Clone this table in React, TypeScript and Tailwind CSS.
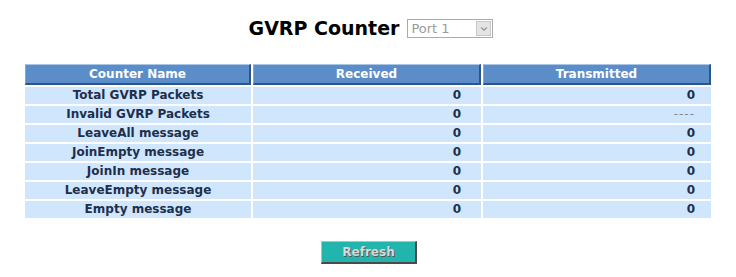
import { ChevronDown } from "lucide-react";

type CounterRow = { name: string; received: string; transmitted: string };

const ROWS: CounterRow[] = [
  { name: "Total GVRP Packets", received: "0", transmitted: "0" },
  { name: "Invalid GVRP Packets", received: "0", transmitted: "----" },
  { name: "LeaveAll message", received: "0", transmitted: "0" },
  { name: "JoinEmpty message", received: "0", transmitted: "0" },
  { name: "JoinIn message", received: "0", transmitted: "0" },
  { name: "LeaveEmpty message", received: "0", transmitted: "0" },
  { name: "Empty message", received: "0", transmitted: "0" },
];

const HEADERS = ["Counter Name", "Received", "Transmitted"];

export default function App() {
  return (
    <div
      className="w-[736px] h-[277px] bg-white text-[#1e2f4c]"
      style={{ fontFamily: '"DejaVu Sans", Verdana, sans-serif' }}
    >
      <div className="flex items-center justify-center gap-[8px] pt-[19px] pl-[6px]">
        <h1 className="text-[19px] font-bold text-black leading-[19px]">GVRP Counter</h1>
        <div className="flex items-center w-[86px] h-[19px] border border-[#a5acb2] bg-white">
          <span className="flex-1 pl-[3px] text-[13px] leading-[17px] text-[#9a9a9a]">Port 1</span>
          <span className="flex items-center justify-center w-[15px] h-[15px] mr-[1px] bg-[#e4e4e4] border border-[#c8c8c8]">
            <ChevronDown size={10} strokeWidth={3} className="text-[#9a9a9a]" />
          </span>
        </div>
      </div>

      <div className="pl-[25px] pt-[26px]">
        <table className="w-[690px] border-separate border-spacing-[2px] -m-[2px] text-[12px] font-bold">
          <thead>
            <tr>
              {HEADERS.map((h) => (
                <th
                  key={h}
                  className="h-[21px] p-0 bg-[#5b8ec8] text-white text-center font-bold leading-[16px] border-t border-l border-t-[#a9c6e6] border-l-[#7ea6d6] border-b-2 border-r-2 border-b-[#2c5688] border-r-[#2c5688]"
                >
                  {h}
                </th>
              ))}
            </tr>
          </thead>
          <tbody>
            {ROWS.map((r) => (
              <tr key={r.name}>
                <td className="h-[17px] p-0 bg-[#d0e6fc] text-center leading-[17px]">{r.name}</td>
                <td className="h-[17px] p-0 pr-[20px] bg-[#d0e6fc] text-right leading-[17px] w-[228px]">
                  {r.received}
                </td>
                <td className="h-[17px] p-0 pr-[16px] bg-[#d0e6fc] text-right leading-[17px] w-[228px]">
                  {r.transmitted === "----" ? (
                    <span className="text-[#7c8794] font-normal tracking-[1px]">----</span>
                  ) : (
                    r.transmitted
                  )}
                </td>
              </tr>
            ))}
          </tbody>
        </table>
      </div>

      <div className="flex justify-center pt-[23px] pl-[2px]">
        <button className="w-[96px] h-[23px] bg-[#22b5ad] border border-t-[#7ed8d2] border-l-[#7ed8d2] border-b-2 border-r-2 border-b-[#4a4a4a] border-r-[#4a4a4a] text-[12px] font-bold text-[#d8d8d8] [text-shadow:1px_1px_0_#555]">
          Refresh
        </button>
      </div>
    </div>
  );
}
